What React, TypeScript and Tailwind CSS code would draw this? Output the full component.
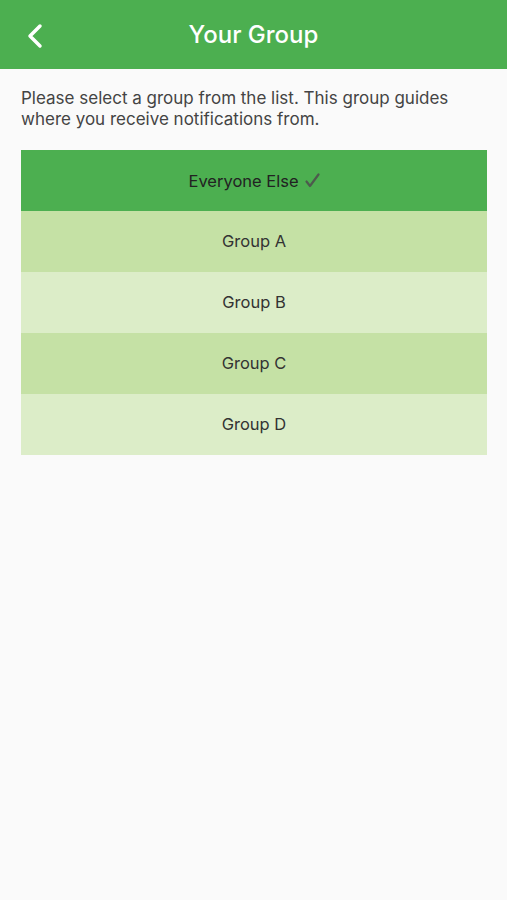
const groups = ['Group A', 'Group B', 'Group C', 'Group D'];

export default function App() {
  return (
    <div className="min-h-[900px] bg-[#fafafa] font-['Inter','Liberation_Sans',sans-serif]">
      <div className="h-[69px] bg-[#4caf50] flex items-center relative">
        <svg className="absolute left-[26px] top-[23px]" width="18" height="26" viewBox="0 0 18 26" fill="none">
          <path d="M14 3L4 13l10 10" stroke="white" strokeWidth="3.5" strokeLinecap="round" strokeLinejoin="round" />
        </svg>
        <h1 className="w-full text-center text-white text-[24px] font-medium pt-[1px]">Your Group</h1>
      </div>
      <div className="pl-[21px] pr-[20px] pt-[19px]">
        <p className="text-[17px] leading-[21px] text-[#444]">
          Please select a group from the list. This group guides where you receive notifications from.
        </p>
        <div className="mt-[20px]">
          <div className="h-[61px] bg-[#4caf50] flex items-center justify-center text-[16.5px] text-[#222] pt-[2px]">
            Everyone Else
            <svg className="ml-[6px] mb-[2px]" width="15" height="15" viewBox="0 0 15 15" fill="none">
              <path d="M1.5 8.5L5 13L13.5 1.5" stroke="#4d5a4d" strokeWidth="2.2" strokeLinecap="round" strokeLinejoin="round" />
            </svg>
          </div>
          {groups.map((g, i) => (
            <div
              key={g}
              className={`h-[61px] flex items-center justify-center text-[16.5px] text-[#333] ${i % 2 === 0 ? 'bg-[#c5e1a5]' : 'bg-[#dcedc8]'}`}
            >
              {g}
            </div>
          ))}
        </div>
      </div>
    </div>
  );
}
